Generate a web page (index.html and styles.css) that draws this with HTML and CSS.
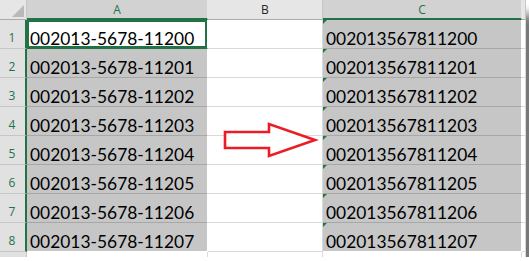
FILE: index.html
```html
<!DOCTYPE html>
<html lang="en">

<head>
  <meta charset="UTF-8">
  <meta name="viewport" content="width=device-width, initial-scale=1.0">
  <title>Remove dashes from numbers</title>
  <link rel="stylesheet" href="styles.css">
</head>

<body>
  <!-- column A keeps the dashes, column C is the cleaned number (stored as text) -->
  <div class="sheet">
    <div class="corner"><span class="tri"></span></div>
    <div class="col-head sel">A</div>
    <div class="col-head">B</div>
    <div class="col-head sel">C</div>
    <div class="col-head"></div>

    <div class="row-head">1</div>
    <div class="cell pick active">002013-5678-11200</div>
    <div class="cell"></div>
    <div class="cell pick flag">002013567811200</div>
    <div class="cell"></div>

    <div class="row-head">2</div>
    <div class="cell pick">002013-5678-11201</div>
    <div class="cell"></div>
    <div class="cell pick flag">002013567811201</div>
    <div class="cell"></div>

    <div class="row-head">3</div>
    <div class="cell pick">002013-5678-11202</div>
    <div class="cell"></div>
    <div class="cell pick flag">002013567811202</div>
    <div class="cell"></div>

    <div class="row-head">4</div>
    <div class="cell pick">002013-5678-11203</div>
    <div class="cell"></div>
    <div class="cell pick flag">002013567811203</div>
    <div class="cell"></div>

    <div class="row-head">5</div>
    <div class="cell pick">002013-5678-11204</div>
    <div class="cell"></div>
    <div class="cell pick flag">002013567811204</div>
    <div class="cell"></div>

    <div class="row-head">6</div>
    <div class="cell pick">002013-5678-11205</div>
    <div class="cell"></div>
    <div class="cell pick flag">002013567811205</div>
    <div class="cell"></div>

    <div class="row-head">7</div>
    <div class="cell pick">002013-5678-11206</div>
    <div class="cell"></div>
    <div class="cell pick flag">002013567811206</div>
    <div class="cell"></div>

    <div class="row-head">8</div>
    <div class="cell pick last">002013-5678-11207</div>
    <div class="cell"></div>
    <div class="cell pick flag last">002013567811207</div>
    <div class="cell"></div>

    <!-- top sliver of row 9 -->
    <div class="row-head stub"></div>
    <div class="cell stub"></div>
    <div class="cell stub"></div>
    <div class="cell stub"></div>
    <div class="cell stub"></div>

    <svg class="arrow" viewBox="0 0 100 40" width="100" height="40">
      <polygon points="5,12 49,12 49,4 95,20 49,36 49,28 5,28" fill="#fff" stroke="#ec1c24" stroke-width="2.6" />
    </svg>
  </div>
</body>

</html>
```

FILE: styles.css
```css
* {
  padding: 0;
  margin: 0;
  box-sizing: border-box;
}

body {
  background: #fff;
  overflow: hidden;
}

.sheet {
  position: relative;
  display: grid;
  grid-template-columns: 27px 181px 115px 199px 4px;
  grid-template-rows: 20px repeat(8, 29px) 5px;
  width: 526px;
  background: #fff;
  box-shadow: 14px 14px 10px #787878;
}

/* headers */
.corner {
  position: relative;
  background: #e6e6e6;
  border-right: 1px solid #c6c6c6;
  border-bottom: 1px solid #ababab;
}

.corner .tri {
  position: absolute;
  left: 12px;
  top: 5px;
  width: 12px;
  height: 12px;
  background: #b9b9b9;
  clip-path: polygon(100% 0, 100% 100%, 0 100%);
}

.col-head {
  display: flex;
  justify-content: center;
  align-items: flex-end;
  padding-bottom: 3px;
  background: #e6e6e6;
  border-right: 1px solid #c6c6c6;
  border-bottom: 1px solid #ababab;
  font: 12px/12px "Open Sans", sans-serif;
  color: #262626;
}

.col-head.sel {
  padding-bottom: 2px;
  background: #d2d2d2;
  color: #217346;
  border-right-color: #e6e6e6;
  border-bottom: 2px solid #217346;
}

.row-head {
  display: flex;
  justify-content: center;
  align-items: flex-end;
  padding-bottom: 4px;
  padding-right: 1px;
  background: #e1e1e1;
  border-right: 2px solid #217346;
  border-bottom: 1px solid #c6c6c6;
  font: 12px/12px "Open Sans", sans-serif;
  color: #217346;
}

.row-head.stub {
  border-right: 1px solid #c6c6c6;
  border-bottom: 0;
}

/* cells */
.cell {
  position: relative;
  display: flex;
  align-items: flex-end;
  padding: 0 0 1px 3px;
  border-right: 1px solid #dadada;
  border-bottom: 1px solid #dadada;
  font: 17.4px/17px Lato, "Liberation Sans", sans-serif;
  color: #000;
  white-space: nowrap;
}

.cell.stub {
  border-bottom: 0;
}

.pick {
  background: #c6c6c6;
  border-right-color: #fff;
  border-bottom-color: #a8a8a8;
}

.pick.last {
  border-bottom-color: #fff;
}

.active {
  background: #fff;
  box-shadow: inset 0 0 0 2px #217346;
  border-bottom-color: #217346;
}

/* "number stored as text" marker */
.flag::before {
  content: "";
  position: absolute;
  left: 0;
  top: 0;
  width: 4px;
  height: 4px;
  background: #1d7a3a;
  clip-path: polygon(0 0, 100% 0, 0 100%);
}

.arrow {
  position: absolute;
  left: 220px;
  top: 120px;
}
```
